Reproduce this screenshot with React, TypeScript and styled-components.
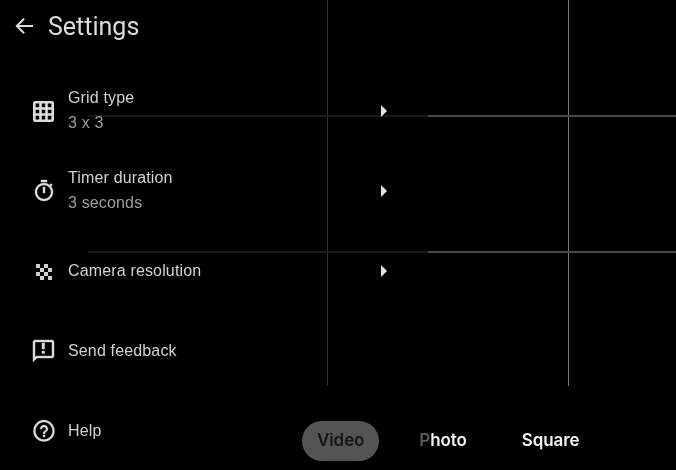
import React from "react";
import styled, { createGlobalStyle } from "styled-components";

const GlobalStyle = createGlobalStyle`
  html, body {
    margin: 0;
    padding: 0;
    background: #000;
  }
`;

const Screen = styled.div`
  position: relative;
  width: 676px;
  height: 470px;
  overflow: hidden;
  background: #000;
  font-family: "Liberation Sans", Arial, sans-serif;
`;

const VLine = styled.div<{ $x: number; $bright?: boolean }>`
  position: absolute;
  top: 0;
  left: ${(p) => p.$x}px;
  width: 1px;
  height: 386px;
  background: ${(p) => (p.$bright ? "#777" : "#303030")};
`;

const HLine = styled.div<{ $y: number }>`
  position: absolute;
  left: 88px;
  right: 0;
  top: ${(p) => p.$y}px;
  height: 2px;
  background: linear-gradient(to right, #181818 340px, #4a4a4a 340px);
`;

const Panel = styled.div`
  position: relative;
  display: flex;
  flex-direction: column;
  width: 392px;
  will-change: transform;
`;

const Header = styled.div`
  display: flex;
  align-items: center;
  height: 51px;
  padding-left: 12px;
  gap: 12px;
  margin-bottom: 20px;
`;

const BackButton = styled.div`
  display: flex;
  width: 24px;
  height: 24px;
  color: #dcdcdc;
`;

const Title = styled.h1`
  margin: 1px 0 0;
  font-family: Roboto, sans-serif;
  font-size: 25px;
  font-weight: 400;
  color: #dcdcdc;
`;

const Row = styled.div`
  display: flex;
  align-items: center;
  height: 80px;
  padding-left: 32px;
  gap: 12px;
`;

const IconBox = styled.div`
  display: flex;
  flex: none;
  width: 24px;
  height: 24px;
  color: #dcdcdc;
`;

const RowText = styled.div`
  flex: 1;
  display: flex;
  flex-direction: column;
  gap: 6px;
`;

const RowLabel = styled.div<{ $withValue?: boolean }>`
  margin-top: ${(p) => (p.$withValue ? -2 : -1)}px;
  font-size: 16px;
  line-height: 19px;
  letter-spacing: 0.15px;
  color: #d2d2d2;
`;

const RowValue = styled.div`
  font-size: 16px;
  line-height: 19px;
  letter-spacing: 0.15px;
  color: #9e9e9e;
`;

const Chevron = styled.div`
  flex: none;
  width: 0;
  height: 0;
  margin: 0 5px 0 0;
  border-top: 6px solid transparent;
  border-bottom: 6px solid transparent;
  border-left: 6px solid #e4e4e4;
`;

const ModeBar = styled.div`
  position: absolute;
  left: 302px;
  top: 421px;
  display: flex;
  align-items: center;
  height: 40px;
  font-family: Inter, Roboto, sans-serif;
  font-size: 17px;
  font-weight: 600;
  letter-spacing: -0.1px;
  will-change: transform;
`;

const Mode = styled.div<{ $active?: boolean; $ml?: number }>`
  display: flex;
  align-items: center;
  box-sizing: border-box;
  height: ${(p) => (p.$active ? 40 : 38)}px;
  margin-bottom: ${(p) => (p.$active ? 0 : 2)}px;
  margin-left: ${(p) => p.$ml ?? 0}px;
  padding: ${(p) => (p.$active ? "0 15px 2px" : "0")};
  border-radius: 20px;
  background: ${(p) => (p.$active ? "#545454" : "transparent")};
  color: ${(p) => (p.$active ? "#161616" : "#f2f2f2")};
`;

const Faded = styled.span`
  color: #5a5a5a;
`;

const ArrowBack = () => (
  <svg viewBox="0 0 24 24" width="24" height="24" fill="currentColor">
    <path d="M21 11H7.2l5.6-5.6L11.4 4l-8 8 8 8 1.4-1.4L7.2 13H21v-2z" />
  </svg>
);

const GridIcon = () => (
  <svg viewBox="0 0 24 24" width="24" height="24" fill="none" stroke="currentColor" strokeWidth="2.6">
    <rect x="2.300" y="3.300" width="18.400" height="18.400" rx="1" />
    <path d="M8.500 3v19M14.500 3v19M2 9.500h19M2 15.500h19" />
  </svg>
);

const TimerIcon = () => (
  <svg viewBox="0 0 24 24" width="24" height="24" fill="currentColor" stroke="currentColor" strokeWidth="0.4">
    <path d="M15 1H9v2h6V1zm-4 13h2V8h-2v6zm8.030-6.610l1.420-1.420c-.43-.51-.9-.99-1.410-1.410l-1.420 1.420A8.962 8.962 0 0 0 12 4c-4.970 0-9 4.030-9 9s4.020 9 9 9 9-4.030 9-9c0-2.120-.74-4.070-1.970-5.610zM12 20c-3.870 0-7-3.130-7-7s3.130-7 7-7 7 3.130 7 7-3.130 7-7 7z" />
  </svg>
);

const CheckerIcon = () => (
  <svg viewBox="0 0 24 24" width="24" height="24" fill="#cfcfcf">
    <path d="M4 5h4v4H4zM12 5h4v4h-4zM8 9h4v4H8zM16 9h4v4h-4zM4 13h4v4H4zM12 13h4v4h-4zM8 17h4v4H8zM16 17h4v4h-4z" />
  </svg>
);

const FeedbackIcon = () => (
  <svg viewBox="0 0 24 24" width="24" height="24" fill="currentColor" stroke="currentColor" strokeWidth="0.4">
    <path d="M20 1H3C1.900 1 1 1.900 1 3v20l4-4h15c1.100 0 2-.9 2-2V3c0-1.100-.9-2-2-2zm0 16H4.200L3 18.200V3h17v14zM10 12h2.600v2.600H10zm0-8h2.600v6H10z" />
  </svg>
);

const HelpIcon = () => (
  <svg viewBox="0 0 24 24" width="24" height="24" fill="currentColor" stroke="currentColor" strokeWidth="0.3">
    <path d="M11 18h2v-2h-2v2zm1-17C6.200 1 1.500 5.700 1.500 12s4.700 10.500 10.500 10.500S22.500 18 22.500 12 17.800 1 12 1zm0 19.500c-4.700 0-8.500-3.800-8.500-8.500S7.300 3 12 3s8.500 4.300 8.500 9-3.800 8.500-8.500 8.500zM12 6c-2.210 0-4 1.790-4 4h2c0-1.100.9-2 2-2s2 .9 2 2c0 2-3 1.750-3 5h2c0-2.250 3-2.500 3-5 0-2.210-1.790-4-4-4z" />
  </svg>
);

const items = [
  { icon: <GridIcon />, label: "Grid type", value: "3 x 3", more: true },
  { icon: <TimerIcon />, label: "Timer duration", value: "3 seconds", more: true },
  { icon: <CheckerIcon />, label: "Camera resolution", more: true },
  { icon: <FeedbackIcon />, label: "Send feedback" },
  { icon: <HelpIcon />, label: "Help" },
];

export default function App() {
  return (
    <Screen>
      <GlobalStyle />
      <VLine $x={327} />
      <VLine $x={568} $bright />
      <HLine $y={115} />
      <HLine $y={251} />
      <Panel>
        <Header>
          <BackButton>
            <ArrowBack />
          </BackButton>
          <Title>Settings</Title>
        </Header>
        {items.map((item) => (
          <Row key={item.label}>
            <IconBox>{item.icon}</IconBox>
            <RowText>
              <RowLabel $withValue={!!item.value}>{item.label}</RowLabel>
              {item.value && <RowValue>{item.value}</RowValue>}
            </RowText>
            {item.more && <Chevron />}
          </Row>
        ))}
      </Panel>
      <ModeBar>
        <Mode $active>Video</Mode>
        <Mode $ml={40}>
          <span>
            <Faded>P</Faded>hoto
          </span>
        </Mode>
        <Mode $ml={55}>Square</Mode>
      </ModeBar>
    </Screen>
  );
}
